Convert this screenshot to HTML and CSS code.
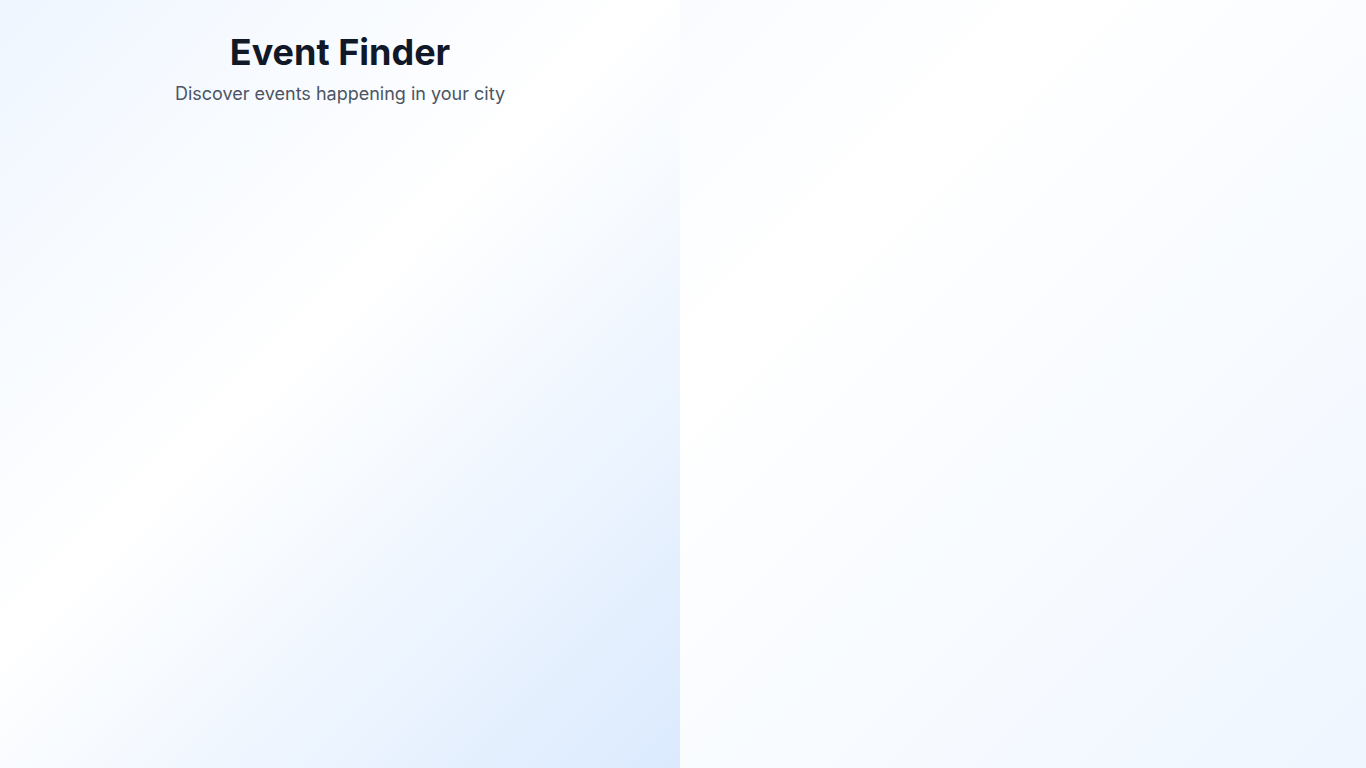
FILE: index.html
```html
<!DOCTYPE html>
<html lang="en">
<head>
<meta charset="utf-8">
<title>Event Finder</title>
<link rel="stylesheet" href="styles.css">
</head>
<body>
<div class="app">
  <section class="left">
    <header class="head">
      <h1 class="title">Event Finder</h1>
      <p class="subtitle">Discover events happening in your city</p>
    </header>
  </section>
  <section class="right"></section>
</div>
</body>
</html>
```

FILE: styles.css
```css
* { box-sizing: border-box; }
html, body { margin: 0; padding: 0; height: 100%; }
body {
  font-family: Inter, "Noto Sans", "Liberation Sans", sans-serif;
  background: linear-gradient(135deg, #eff6ff 0%, #ffffff 50%, #eff6ff 100%);
  min-height: 100vh;
}
.app {
  display: flex;
  height: 100vh;
}
.left {
  width: 680px;
  flex: 0 0 680px;
  background: linear-gradient(135deg, #eff6ff 0%, #ffffff 45%, #dbeafe 100%);
  padding: 32px;
}
.right { flex: 1; }
.head { text-align: center; }
.title {
  margin: 0;
  font-size: 36px;
  line-height: 40px;
  font-weight: 700;
  color: #111827;
}
.subtitle {
  margin: 8px 0 0;
  font-size: 18px;
  line-height: 28px;
  color: #4b5563;
}
```
